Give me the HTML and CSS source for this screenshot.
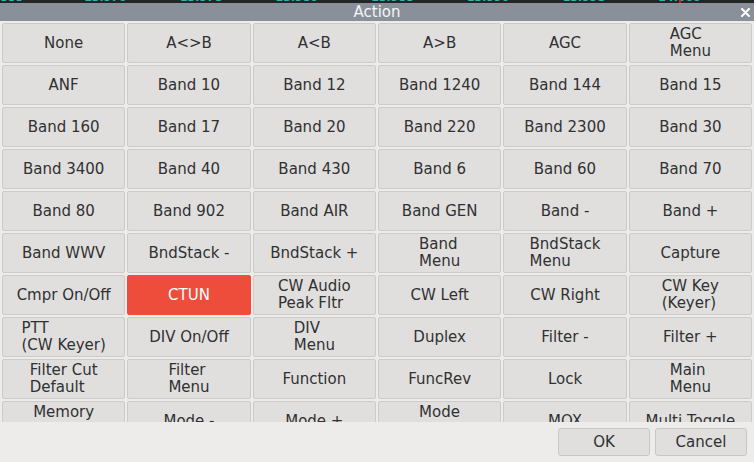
FILE: index.html
```html
<!DOCTYPE html>
<html>
<head>
<meta charset="utf-8">
<link rel="stylesheet" href="styles.css">
</head>
<body>
<div class="window">
  <div class="spectrum">
    <span class="freq f0">888</span>
    <span class="freq">13.970</span>
    <span class="freq">13.978</span>
    <span class="freq">13.980</span>
    <span class="freq">13.988</span>
    <span class="freq">13.990</span>
    <span class="freq">13.998</span>
    <span class="freq">14.000<i class="mark"></i></span>
  </div>
  <div class="titlebar">
    <span class="title">Action</span>
    <svg class="close" width="9" height="9" viewBox="0 0 9 9"><path d="M1 1 L8 8 M8 1 L1 8" stroke="#ffffff" stroke-width="2" stroke-linecap="round"/></svg>
  </div>
  <div class="grid-wrap">
    <div class="grid">
      <div class="btn">None</div>
      <div class="btn">A&lt;&gt;B</div>
      <div class="btn">A&lt;B</div>
      <div class="btn">A&gt;B</div>
      <div class="btn">AGC</div>
      <div class="btn"><span class="ml">AGC<br>Menu</span></div>

      <div class="btn">ANF</div>
      <div class="btn">Band 10</div>
      <div class="btn">Band 12</div>
      <div class="btn">Band 1240</div>
      <div class="btn">Band 144</div>
      <div class="btn">Band 15</div>

      <div class="btn">Band 160</div>
      <div class="btn">Band 17</div>
      <div class="btn">Band 20</div>
      <div class="btn">Band 220</div>
      <div class="btn">Band 2300</div>
      <div class="btn">Band 30</div>

      <div class="btn">Band 3400</div>
      <div class="btn">Band 40</div>
      <div class="btn">Band 430</div>
      <div class="btn">Band 6</div>
      <div class="btn">Band 60</div>
      <div class="btn">Band 70</div>

      <div class="btn">Band 80</div>
      <div class="btn">Band 902</div>
      <div class="btn">Band AIR</div>
      <div class="btn">Band GEN</div>
      <div class="btn">Band -</div>
      <div class="btn">Band +</div>

      <div class="btn">Band WWV</div>
      <div class="btn">BndStack -</div>
      <div class="btn">BndStack +</div>
      <div class="btn"><span class="ml">Band<br>Menu</span></div>
      <div class="btn"><span class="ml">BndStack<br>Menu</span></div>
      <div class="btn">Capture</div>

      <div class="btn">Cmpr On/Off</div>
      <div class="btn active">CTUN</div>
      <div class="btn"><span class="ml">CW Audio<br>Peak Fltr</span></div>
      <div class="btn">CW Left</div>
      <div class="btn">CW Right</div>
      <div class="btn"><span class="ml">CW Key<br>(Keyer)</span></div>

      <div class="btn"><span class="ml">PTT<br>(CW Keyer)</span></div>
      <div class="btn">DIV On/Off</div>
      <div class="btn"><span class="ml">DIV<br>Menu</span></div>
      <div class="btn">Duplex</div>
      <div class="btn">Filter -</div>
      <div class="btn">Filter +</div>

      <div class="btn"><span class="ml">Filter Cut<br>Default</span></div>
      <div class="btn"><span class="ml">Filter<br>Menu</span></div>
      <div class="btn">Function</div>
      <div class="btn">FuncRev</div>
      <div class="btn">Lock</div>
      <div class="btn"><span class="ml">Main<br>Menu</span></div>

      <div class="btn"><span class="ml">Memory<br>Menu</span></div>
      <div class="btn">Mode -</div>
      <div class="btn">Mode +</div>
      <div class="btn"><span class="ml">Mode<br>Menu</span></div>
      <div class="btn">MOX</div>
      <div class="btn">Multi Toggle</div>
    </div>
  </div>
  <div class="actions">
    <div class="dbtn">OK</div>
    <div class="dbtn">Cancel</div>
  </div>
</div>
</body>
</html>
```

FILE: styles.css
```css
html, body {
  margin: 0;
  padding: 0;
}
body {
  width: 754px;
  height: 462px;
  overflow: hidden;
  background: #edecea;
  font-family: "DejaVu Sans", sans-serif;
  font-size: 15px;
  color: #2f3133;
}
.window {
  display: flex;
  flex-direction: column;
  height: 462px;
}
.spectrum {
  height: 3px;
  background: #232527;
  overflow: hidden;
  display: flex;
  padding-left: 88px;
  gap: 0;
}
.freq {
  display: block;
  width: 100px;
  font-size: 11px;
  line-height: 11px;
  margin-top: -8px;
  color: #2fb3b3;
  font-weight: bold;
  position: relative;
}
.freq.f0 {
  margin-left: -88px;
  width: 88px;
}
.mark {
  display: inline-block;
  width: 2px;
  height: 11px;
  background: #d02020;
  margin-left: -22px;
  vertical-align: top;
}
.titlebar {
  height: 18px;
  background: #8a9099;
  display: flex;
  align-items: center;
  justify-content: center;
  position: relative;
}
.title {
  color: #f4f5f6;
  font-size: 15px;
  line-height: 18px;
  margin-top: -1px;
}
.close {
  position: absolute;
  right: 4px;
  top: 5px;
}
.grid-wrap {
  height: 401px;
  overflow: hidden;
  padding: 2px 2px 0 2px;
  box-sizing: border-box;
}
.grid {
  display: grid;
  grid-template-columns: repeat(6, 1fr);
  grid-auto-rows: 40px;
  gap: 2px;
}
.btn {
  background: #e1dfdd;
  border: 1px solid #cdcbc9;
  border-radius: 2px;
  display: flex;
  align-items: center;
  justify-content: center;
  text-align: center;
  line-height: 17px;
  white-space: nowrap;
}
.btn.active {
  background: #ef4d3b;
  border-color: #ef4d3b;
  color: #ffffff;
}
.ml {
  text-align: left;
  display: inline-block;
}
.actions {
  flex: 1;
  display: flex;
  justify-content: flex-end;
  align-items: flex-start;
  gap: 5px;
  padding: 6px 7px 0 0;
  background: #edecea;
}
.dbtn {
  width: 90px;
  height: 26px;
  background: #e1dfdd;
  border: 1px solid #c9c7c5;
  border-radius: 3px;
  display: flex;
  align-items: center;
  justify-content: center;
}
```
